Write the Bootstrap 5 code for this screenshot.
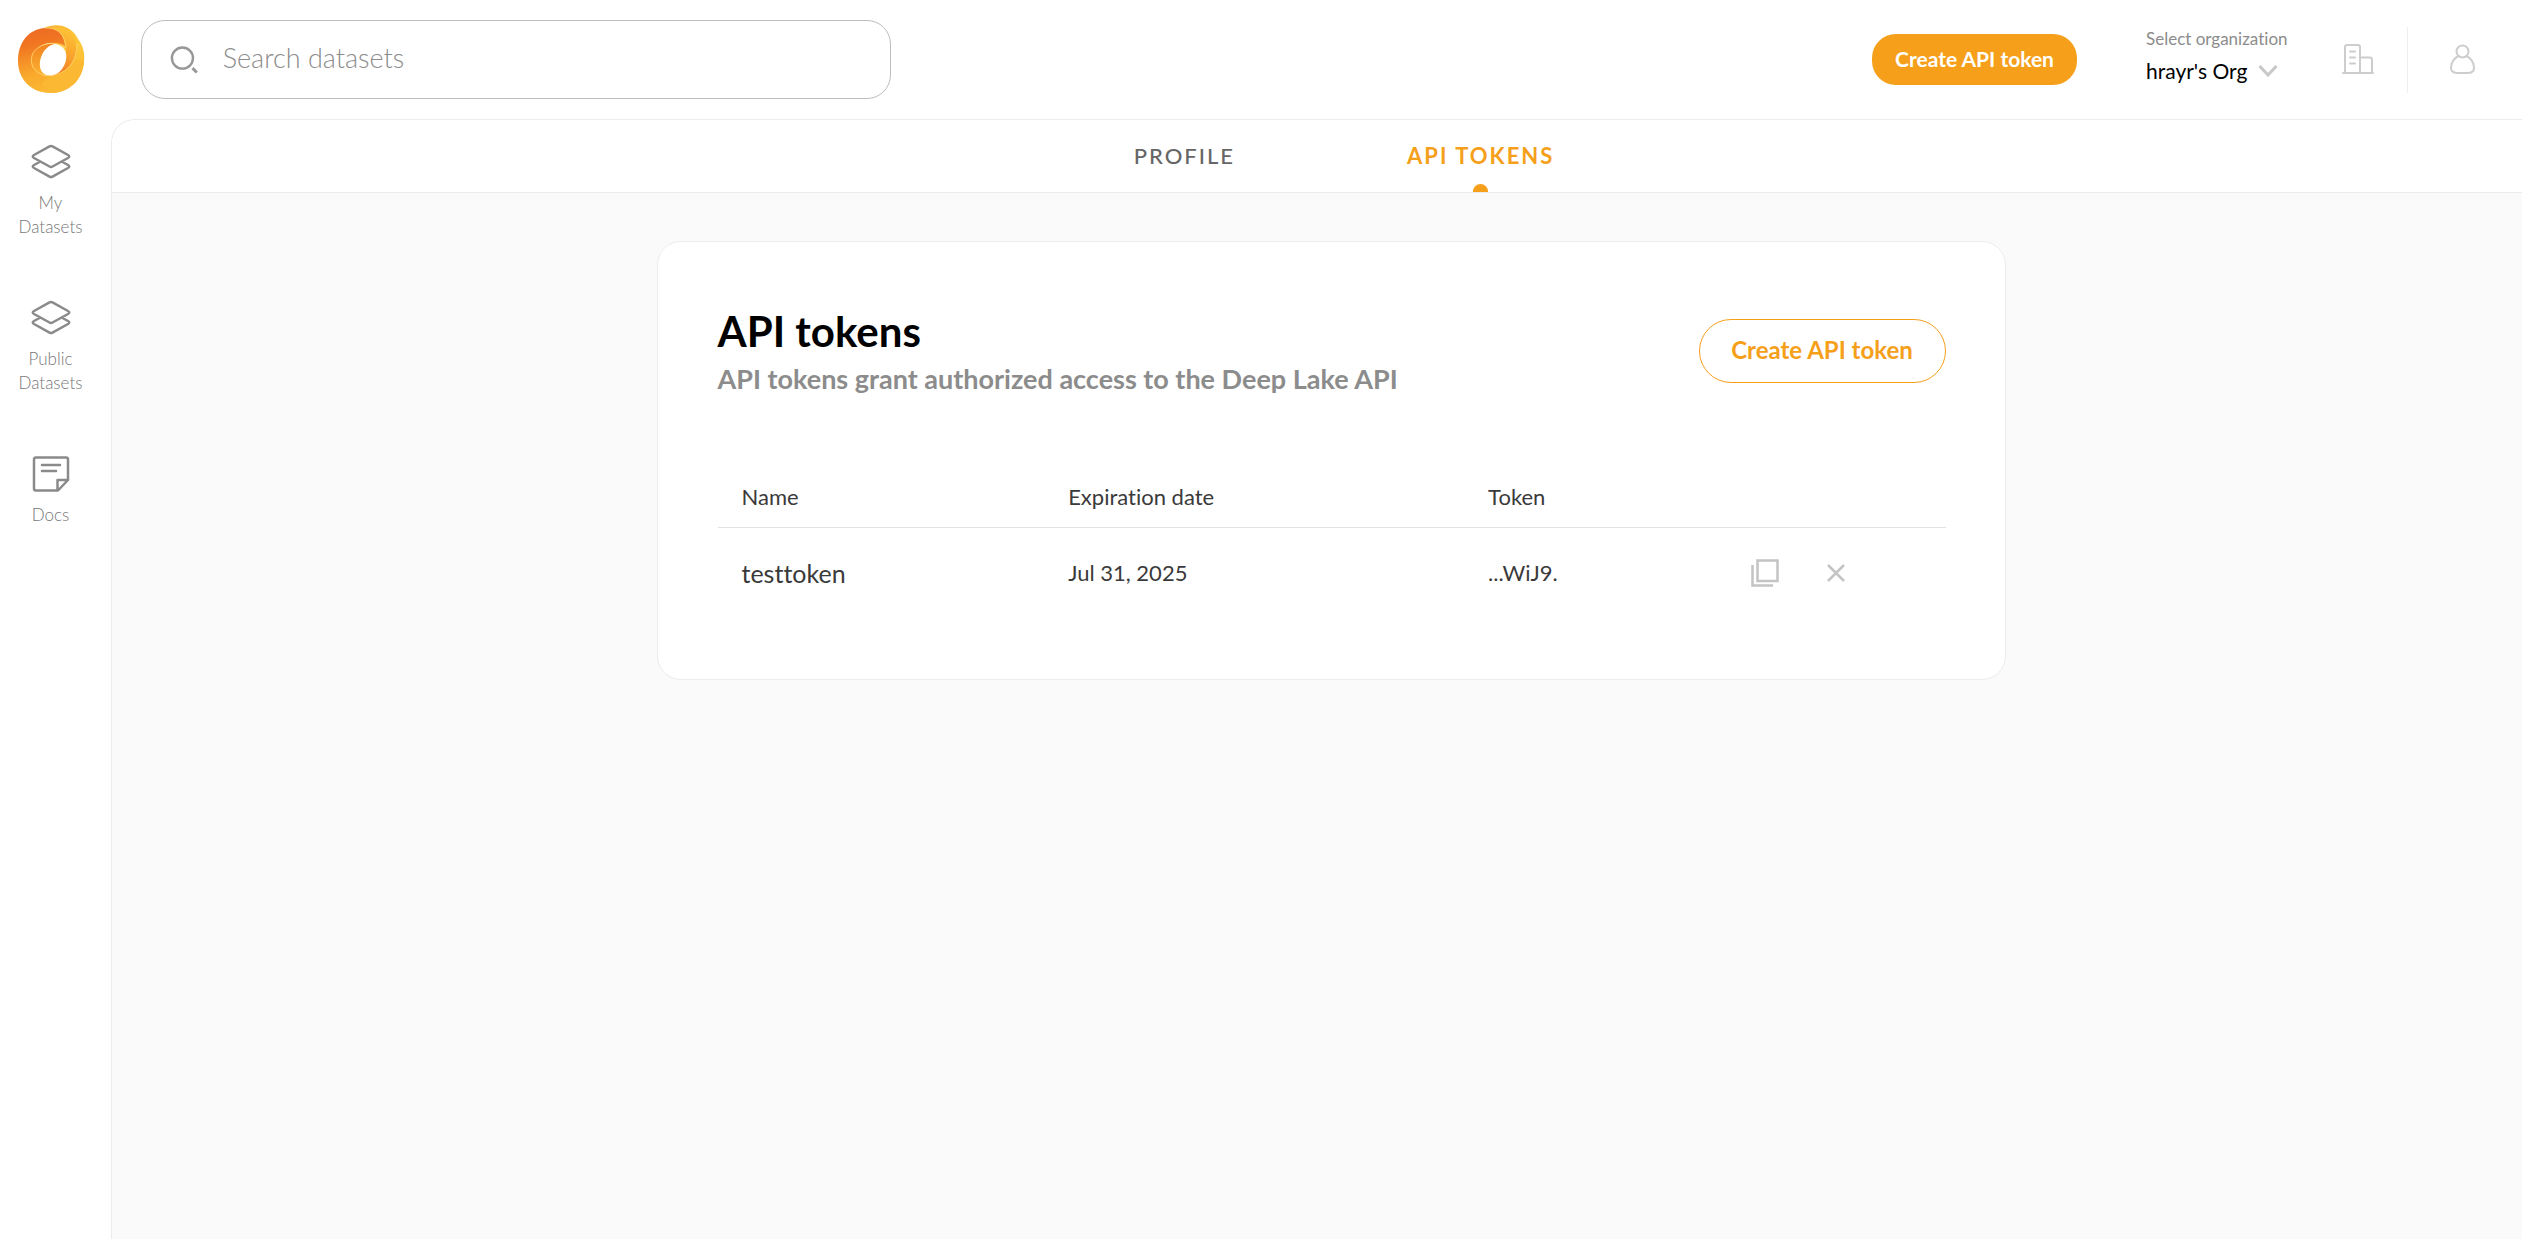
<!DOCTYPE html>
<html lang="en">
<head>
<meta charset="utf-8">
<meta name="viewport" content="width=device-width, initial-scale=1">
<title>API tokens</title>
<link href="https://cdn.jsdelivr.net/npm/bootstrap@5.3.0/dist/css/bootstrap.min.css" rel="stylesheet">
<style>
  :root { --brand: #f59f1b; --line: #ececec; --muted: #8c8c8c; }
  body { font-family: Lato, "Open Sans", sans-serif; font-variant-ligatures: none; color: #222; background: #fff; }
  svg { display: block; fill: none; stroke-linecap: round; stroke-linejoin: round; }
  .side-rail { width: 111px; padding: 24px 10px 0 0; }
  .side-links { margin-top: 50px; gap: 60px; }
  .side-links a { width: 100px; min-height: 96px; color: #777; font-size: 17px; line-height: 24px; font-weight: 300; }
  .side-links svg { margin-bottom: 11px; stroke: #8a8a8a; stroke-width: 3; }
  .top-bar { height: 119px; padding-left: 30px; padding-right: 46px; }
  .search-field { width: 750px; height: 79px; border: 1px solid #bdbdbd; border-radius: 24px; padding-left: 28px; }
  .search-field input { font-size: 27px; font-weight: 300; color: #555; padding: 0 24px 4px; background: none; }
  .search-field input::placeholder { color: #8c8c8c; opacity: 1; }
  .btn-solid { height: 51px; width: 205px; border-radius: 24px; background: var(--brand); color: #fff; font-size: 21px; font-weight: 700; padding: 0 0 2px; }
  .btn-line { height: 64px; width: 247px; border-radius: 32px; border: 1px solid var(--brand); color: var(--brand); font-size: 24px; font-weight: 700; padding: 0 0 2px; }
  .btn-solid:hover { background: #e8930f; color: #fff; }
  .btn-line:hover { background: #fff7ea; color: var(--brand); border-color: var(--brand); }
  .org-picker { margin-left: 69px; width: 150px; padding-bottom: 8px; }
  .org-picker label { font-size: 17px; line-height: 24px; color: var(--muted); white-space: nowrap; }
  .org-picker select { font-size: 21px; line-height: 28px; color: #000; border: 0; padding: 0 28px 0 0; margin-top: 6px; width: 132px; border-radius: 0;
    background-color: transparent; background-position: right center; background-size: 20px 12px;
    background-image: url("data:image/svg+xml,%3Csvg xmlns='http://www.w3.org/2000/svg' viewBox='0 0 20 12'%3E%3Cpath d='M1.500 1L10 10L18.500 1' fill='none' stroke='%23c8c8c8' stroke-width='3'/%3E%3C/svg%3E"); }
  .top-icon { padding: 0 0 2px; border: 0; background: none; }
  .top-icon svg { stroke: #cdcdcd; stroke-width: 2; }
  .org-icon { margin-left: 45px; }
  .bar-split { width: 1px; height: 66px; background: #eee; margin: 0 41px 0 32px; }
  .page-body { background: #fafafa; border: solid var(--line); border-width: 1px 0 0 1px; border-top-left-radius: 24px; overflow: hidden; }
  .tab-strip { height: 73px; background: #fff; border-bottom: 1px solid var(--line); gap: 172px; padding-left: 54px; }
  .tab-strip a { color: #666; font-size: 22px; font-weight: 500; letter-spacing: 2px; line-height: 30px; }
  .tab-strip a.active { color: var(--brand); font-weight: 700; }
  .tab-strip a.active::after { content: ""; position: absolute; left: calc(50% - 8px); bottom: 0; width: 15px; height: 8px; border-radius: 8px 8px 0 0; background: var(--brand); }
  .card-zone { padding: 48px 0 48px 28px; }
  .token-card { max-width: 1349px; border: 1px solid var(--line); border-radius: 24px; background: #fff; padding: 61px 59px 60px 60px; }
  .token-card h1 { font-size: 42px; line-height: 56px; font-weight: 700; color: #000; }
  .token-card h1 + p { font-size: 27px; line-height: 40px; font-weight: 700; color: var(--muted); }
  .token-table { margin-top: 68px; font-size: 22px; line-height: 32px; table-layout: fixed; }
  .token-table > :not(caption) > * > * { background: none; border-color: #e2e2e2; padding: 0 24px; vertical-align: middle; color: #3a3a3a; font-weight: 400; }
  .token-table > thead > tr > * { height: 60px; }
  .token-table > tbody > tr > td { height: 92px; border: 0; }
  .token-table td:first-child { font-size: 25px; }
  .token-table button { border: 0; background: none; padding: 0; }
  .token-table svg { stroke: #c4c4c4; stroke-linecap: butt; stroke-linejoin: miter; }
</style>
<script src="https://cdn.jsdelivr.net/npm/bootstrap@5.3.0/dist/js/bootstrap.bundle.min.js"></script>
</head>
<body>
<div class="d-flex min-vh-100">
  <aside class="side-rail flex-shrink-0 d-flex flex-column align-items-center">
    <a href="#" aria-label="Home">
      <svg width="68" height="70" viewBox="0 0 68 70">
        <defs>
          <linearGradient id="gRing" x1="0.2" y1="0" x2="0.4" y2="1"><stop offset="0" stop-color="#ee6a23"/><stop offset=".25" stop-color="#f07522"/><stop offset=".7" stop-color="#f9a92c"/><stop offset="1" stop-color="#fbb832"/></linearGradient>
          <linearGradient id="gArc" x1="0" y1="0" x2="0.3" y2="1"><stop offset="0" stop-color="#fbb42f"/><stop offset=".5" stop-color="#fdc83a"/><stop offset="1" stop-color="#fbb331"/></linearGradient>
          <linearGradient id="gIn" x1="0" y1="0" x2="0" y2="1"><stop offset="0" stop-color="#f3811f"/><stop offset="1" stop-color="#fab433"/></linearGradient>
          <linearGradient id="gBand" x1=".5" y1="0" x2=".2" y2="1"><stop offset="0" stop-color="#fdc236"/><stop offset=".5" stop-color="#f9a02b"/><stop offset="1" stop-color="#ef6d25"/></linearGradient>
        </defs>
        <path fill="url(#gArc)" d="M27 4C40-2 55 2 61 15C66 21 68 29 67 37C66 56 52 69 33 69L24 50L40 4Z"/>
        <path fill="url(#gRing)" d="M28 4C39 2 47 9 48 22C36 15 22 20 16 30C12 40 18 51 33 52C40 52 48 49 54 43C60 52 48 69 33 69C14 69 1 55 1 37C1 18 12 5 28 4Z"/>
        <path fill="#fbb832" d="M35 51C46 51 54 46 58 36L67 37C66 56 52 69 33 69L24 60Z"/>
        <path fill="url(#gIn)" d="M48 23C36 16 22 20 16 29C10 40 18 53 33 52C20 46 21 26 37 20C42 20 45 21 48 23Z"/>
        <path fill="url(#gBand)" d="M28 4C42 2 58 4 60 24C60 37 50 49 35 51.500C45 46 50 34 49 23C48 9 40 3 28 4Z"/>
        <path stroke="#ffd873" stroke-width=".8" d="M28 4C42 3 48 12 49 23M48 23C36 16 22 20 16 29C11 40 18 51 31 52M60 20C60 38 50 49 35 51.500"/>
        <path fill="#fff" d="M38 20C51 22 52 35 45 45C40 52 30 54 25 48C19 39 26 22 38 20Z"/>
      </svg>
    </a>
    <nav class="side-links d-flex flex-column" aria-label="Main">
      <a href="#" class="d-flex flex-column align-items-center text-center text-decoration-none">
        <svg width="40" height="36" viewBox="0 0 40 36"><path d="M18.500 2.400Q20 1.500 21.500 2.400L37 11Q39.500 12.500 37 14L21.500 22.500Q20 23.500 18.500 22.500L3 14Q.5 12.500 3 11ZM8.500 18L3 21Q.5 22.500 3 24L18.500 32.600Q20 33.500 21.500 32.600L37 24Q39.500 22.500 37 21L31.500 18" stroke-width="2.500"/></svg>
        My<br>Datasets</a>
      <a href="#" class="d-flex flex-column align-items-center text-center text-decoration-none">
        <svg width="40" height="36" viewBox="0 0 40 36"><path d="M18.500 2.400Q20 1.500 21.500 2.400L37 11Q39.500 12.500 37 14L21.500 22.500Q20 23.500 18.500 22.500L3 14Q.5 12.500 3 11ZM8.500 18L3 21Q.5 22.500 3 24L18.500 32.600Q20 33.500 21.500 32.600L37 24Q39.500 22.500 37 21L31.500 18" stroke-width="2.500"/></svg>
        Public<br>Datasets</a>
      <a href="#" class="d-flex flex-column align-items-center text-center text-decoration-none">
        <svg width="40" height="36" viewBox="0 0 40 36"><path d="M5 1.500H35Q37 1.500 37 3.500V24L27 34.500H5Q3 34.500 3 32.500V3.500Q3 1.500 5 1.500ZM26.500 34V24H37M11 9H29M11 15H25" stroke-width="2.500"/></svg>
        Docs</a>
    </nav>
  </aside>

  <div class="flex-grow-1 d-flex flex-column">
    <header class="top-bar d-flex align-items-center">
      <div class="search-field d-flex align-items-center">
        <svg width="30" height="30" viewBox="0 0 30 30" stroke="#979797" stroke-width="2.500"><circle cx="13" cy="13" r="11"/><path stroke-linecap="butt" stroke-width="3" d="M23.500 23.500L28 28"/></svg>
        <input type="search" class="form-control border-0 shadow-none h-100" placeholder="Search datasets" aria-label="Search datasets">
      </div>
      <button type="button" class="btn btn-solid ms-auto">Create API token</button>
      <div class="org-picker">
        <label for="org" class="d-block">Select organization</label>
        <select id="org" class="form-select"><option>hrayr's Org</option></select>
      </div>
      <button type="button" class="top-icon org-icon" aria-label="Organization">
        <svg width="34" height="32" viewBox="0 0 34 32"><path d="M2 30H32M4 30V4Q4 2 6 2H17Q19 2 19 4V30M19 14.500H29Q31 14.500 31 16.500V30M9 8.500H14M9 14.500H14M9 20.500H14"/></svg>
      </button>
      <div class="bar-split"></div>
      <button type="button" class="top-icon" aria-label="Account">
        <svg width="27" height="32" viewBox="0 0 27 32"><circle cx="13.500" cy="8.500" r="6"/><path d="M9.500 13C5 15 2 20 2 25Q2 30 9 30H18Q25 30 25 25C25 20 22 15 17.500 13"/></svg>
      </button>
    </header>

    <main class="page-body flex-grow-1">
      <nav class="tab-strip d-flex justify-content-center" aria-label="Settings">
        <a href="#" class="d-flex align-items-center text-decoration-none">PROFILE</a>
        <a href="#" class="active d-flex align-items-center text-decoration-none position-relative" aria-current="page">API TOKENS</a>
      </nav>
      <div class="card-zone">
        <section class="token-card mx-auto">
          <div class="d-flex justify-content-between align-items-center">
            <div>
              <h1 class="mb-0">API tokens</h1>
              <p class="mb-0">API tokens grant authorized access to the Deep Lake API</p>
            </div>
            <button type="button" class="btn btn-line">Create API token</button>
          </div>
          <table class="table token-table mb-0">
            <colgroup><col style="width:26.600%"><col style="width:34.200%"><col style="width:21.400%"><col style="width:17.800%"></colgroup>
            <thead><tr><th scope="col">Name</th><th scope="col">Expiration date</th><th scope="col">Token</th><td></td></tr></thead>
            <tbody><tr>
              <td>testtoken</td><td>Jul 31, 2025</td><td>...WiJ9.</td>
              <td><div class="d-flex align-items-center gap-5">
                <button type="button" aria-label="Copy token"><svg width="28" height="28" viewBox="0 0 28 28" stroke-width="2.500"><path d="M6.500 1.500H26.500V22H6.500ZM1.500 6V26.500H22"/></svg></button>
                <button type="button" aria-label="Delete token"><svg width="18" height="18" viewBox="0 0 18 18" stroke-width="2.500"><path d="M1 1L17 17M17 1L1 17"/></svg></button>
              </div></td>
            </tr></tbody>
          </table>
        </section>
      </div>
    </main>
  </div>
</div>
</body>
</html>
